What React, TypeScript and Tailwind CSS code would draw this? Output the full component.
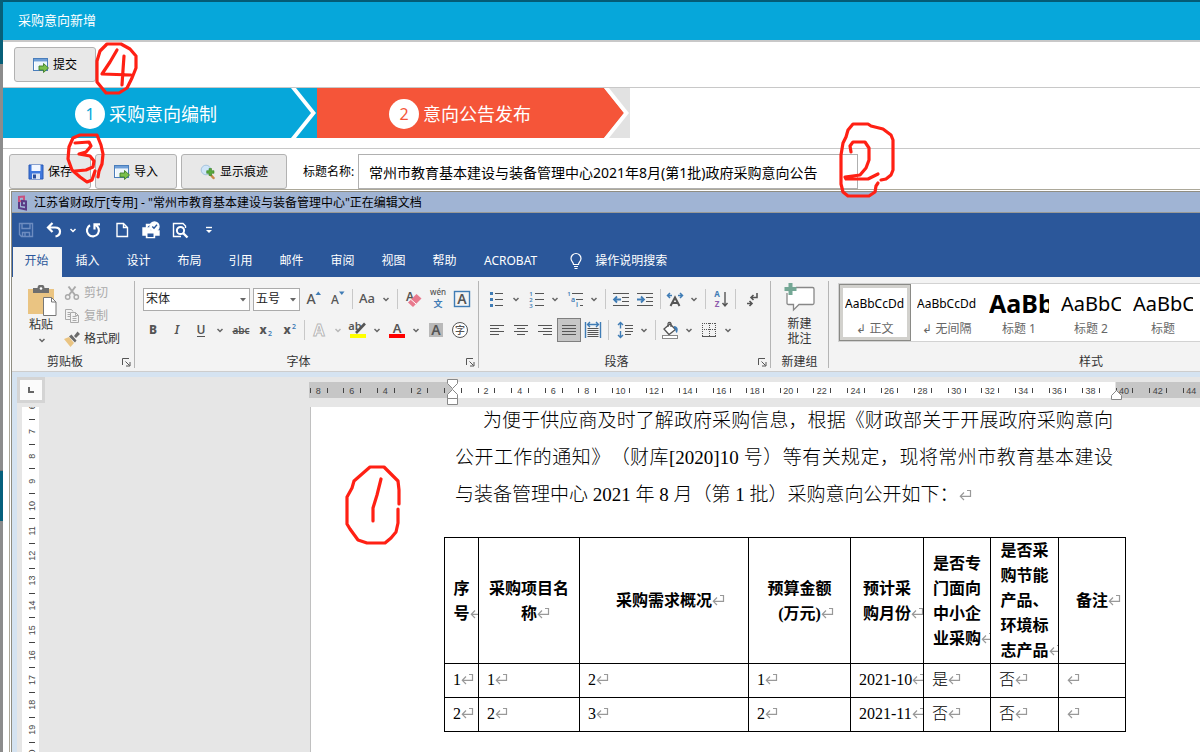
import React from "react";

const BLUE = "#3f7cb5";
const INK = "#555555";
const RED = "#ff2014";

const uiFont = "font-['Noto_Sans','Noto_Sans_CJK_SC',sans-serif]";
const docFont = "font-['Liberation_Serif','Noto_Sans_CJK_SC',serif] [text-spacing-trim:space-all]";

/* ---------- small building blocks ---------- */

function Svg({ className = "size-6", box = "0 0 24 24", children }: { className?: string; box?: string; children: React.ReactNode }) {
  return (
    <svg viewBox={box} className={`${className} shrink-0`} fill="none" stroke={INK} strokeWidth="1.4" aria-hidden="true">
      {children}
    </svg>
  );
}

function Chevron({ color = "#666" }: { color?: string }) {
  return (
    <svg viewBox="0 0 14 14" className="size-3.5 shrink-0" fill="none" stroke={color} strokeWidth="1.5" aria-hidden="true">
      <path d="M4.500 6 7 8.500 9.500 6" />
    </svg>
  );
}

function Tool({ label, active, children }: { label: string; active?: boolean; children: React.ReactNode }) {
  return (
    <button
      type="button"
      aria-label={label}
      className={`flex size-6 shrink-0 items-center justify-center ${active ? "bg-[#c6c6c6] outline outline-1 -outline-offset-1 outline-[#7f7f7f]" : ""}`}
    >
      <Svg>{children}</Svg>
    </button>
  );
}

function Split({ label, faded, children }: { label: string; faded?: boolean; children: React.ReactNode }) {
  return (
    <button type="button" aria-label={label} className="mr-px flex shrink-0 items-center">
      <Svg>{children}</Svg>
      <Chevron color={faded ? "#b8b8b8" : "#666"} />
    </button>
  );
}

function Sep() {
  return (
    <span className="flex w-1.5 shrink-0 justify-center">
      <span className="h-5 w-px bg-[#c8c8c8]" />
    </span>
  );
}

function Letter({ x = 12, y = 17, size = 15, fill = INK, weight = "600", anchor = "middle", children, style }: any) {
  return (
    <text x={x} y={y} fontSize={size} fill={fill} fontWeight={weight} textAnchor={anchor} stroke="none" fontStyle={style} fontFamily="Noto Sans, Noto Sans CJK SC, sans-serif">
      {children}
    </text>
  );
}

function Launcher({ label }: { label: string }) {
  return (
    <button type="button" aria-label={label} className="absolute right-[3px] bottom-1">
      <Svg className="size-[9px]" box="0 0 9 9">
        <path d="M.5 7V.5H7M3.500 3.500l4 4M8 4v4H4" strokeWidth="1" />
      </Svg>
    </button>
  );
}

function Group({ title, width, launcher, children }: { title: string; width: string; launcher?: boolean; children: React.ReactNode }) {
  return (
    <section aria-label={title} className={`relative flex shrink-0 flex-col pt-[5px] ${width}`}>
      <div className="flex-1">{children}</div>
      <div className="pb-0.5 text-center text-xs leading-[14px] text-[#333]">{title}</div>
      {launcher && <Launcher label={`${title}设置`} />}
    </section>
  );
}

function GroupLine() {
  return <div className="mt-1 mb-[3px] w-px shrink-0 bg-[#b5b5b5]" />;
}

function Return() {
  return (
    <span className="inline-block w-0 whitespace-nowrap align-baseline">
      <svg viewBox="0 0 13 12" className="inline-block h-3 w-[13px] max-w-none align-baseline" fill="none" stroke="#999" strokeWidth="1.2" aria-hidden="true">
        <path d="M8 1.500h3.500v5.800H1.500M5 3.500 1.300 7.300 5 11" />
      </svg>
    </span>
  );
}

/* ---------- page header ---------- */

function WindowArrowIcon() {
  return (
    <svg viewBox="0 0 16 16" className="size-4" aria-hidden="true">
      <rect x=".5" y="1.5" width="14" height="12" fill="#fff" stroke="#4a7ebb" />
      <rect x="1" y="2" width="13" height="2.5" fill="#6f9fd8" />
      <rect x="2" y="5" width="12" height="8" fill="#eef6fc" />
      <path d="M6 9h4.500V6.500L15.500 11 10.500 15.500V13H6z" fill="#7cc04b" stroke="#3f7f2a" strokeWidth=".9" />
    </svg>
  );
}

function DiskIcon() {
  return (
    <svg viewBox="0 0 16 16" className="size-4" aria-hidden="true">
      <path d="M1 1h14v14H1z" fill="#3f78dd" stroke="#2858b5" />
      <rect x="3.500" y="1" width="9" height="6" fill="#f3f7ff" />
      <rect x="4" y="9.500" width="8" height="5.500" fill="#dfe6f2" />
      <rect x="5" y="10.500" width="3" height="4" fill="#2c4f99" />
    </svg>
  );
}

function MagnifierPlusIcon() {
  return (
    <svg viewBox="0 0 16 16" className="size-4" aria-hidden="true">
      <path d="m9.500 9.500 4 4.500" stroke="#c98a4b" strokeWidth="2.500" strokeLinecap="round" />
      <circle cx="6" cy="6" r="4.800" fill="#cfe5f8" stroke="#a6c4de" />
      <path d="M9 4.500h2.500v2.200H14v2.600h-2.500v2.200H9V9.300H6.700V6.700H9z" fill="#58a83c" stroke="#3b8428" strokeWidth=".6" />
    </svg>
  );
}

function PageButton({ width, icon, children }: { width: string; icon: React.ReactNode; children: React.ReactNode }) {
  return (
    <button type="button" className={`flex h-[35px] shrink-0 items-center justify-center gap-1 rounded-[3px] border border-[#b2b2b2] bg-[#e8e8e8] text-xs text-black ${width}`}>
      {icon}
      {children}
    </button>
  );
}

function Steps() {
  return (
    <ol className="flex h-[50px] text-lg text-white">
      <li className="relative flex w-[314px] items-center gap-1 bg-[#06a7da] pt-0.5 pl-[72px]">
        <span className="flex size-[30px] items-center justify-center rounded-full bg-white text-base text-[#06a7da]">1</span>
        采购意向编制
        <svg viewBox="0 0 28 50" className="absolute top-0 right-0 h-[50px] w-7" aria-hidden="true">
          <path d="M2 0h5l20 25L7 50H2l20-25z" fill="#fff" />
        </svg>
      </li>
      <li className="relative flex w-[313px] items-center gap-1 bg-[#f55539] pt-0.5 pl-[72px]">
        <span className="flex size-[30px] items-center justify-center rounded-full bg-white text-base text-[#f55539]">2</span>
        意向公告发布
        <svg viewBox="0 0 28 50" className="absolute top-0 right-0 h-[50px] w-7" aria-hidden="true">
          <path d="M2 0h26v50H2l20-25z" fill="#e2e2e2" />
          <path d="M2 0h5l20 25L7 50H2l20-25z" fill="#fff" />
        </svg>
      </li>
    </ol>
  );
}

/* ---------- editor: title, quick access, tabs ---------- */

function QuickButton({ label, children }: { label: string; children: React.ReactNode }) {
  return (
    <button type="button" aria-label={label} className="flex w-7 shrink-0 justify-center">
      <svg viewBox="0 0 18 18" className="size-[18px]" fill="none" stroke="#fff" strokeWidth="1.400" aria-hidden="true">
        {children}
      </svg>
    </button>
  );
}

function QuickAccess() {
  return (
    <div className="flex h-[34px] items-center">
      <QuickButton label="保存">
        <path d="M2.500 2.500h13v13h-11l-2-2zM5 2.500v5h8v-5M5.500 15.500v-4h7v4M8 12v3" stroke="#6d8cc0" />
      </QuickButton>
      <button type="button" aria-label="撤消" className="ml-0.5 flex items-center">
        <span className="flex w-6 justify-center">
          <svg viewBox="0 0 18 18" className="size-[18px]" fill="none" stroke="#fff" strokeWidth="2.200" aria-hidden="true">
            <path d="M7.500 2 3 6.500 7.500 11M3.500 6.500H10c3 0 5 1.500 5 4s-2 4.500-4.500 5" />
          </svg>
        </span>
        <Chevron color="#fff" />
      </button>
      <div className="-ml-px flex items-center gap-px">
        <QuickButton label="重复">
          <path d="M11 3.800A6 6 0 1 1 6 4.200" strokeWidth="2.200" />
          <path d="M10.500 8.500V3.300H16" strokeWidth="2.200" />
        </QuickButton>
        <QuickButton label="新建">
          <path d="M4 2.500h6.500l4 4v9H4zM10.500 2.500v4h4" />
        </QuickButton>
        <QuickButton label="快速打印">
          <path d="M1 7h7v3h9v4H1zM4.500 12.500h8v4h-8zM4.500 7V3.500H8" fill="#fff" stroke="#fff" />
          <rect x="5.500" y="12.500" width="6" height="3.500" fill="#2b579a" stroke="none" />
          <circle cx="12.500" cy="5.500" r="4.500" fill="#fff" stroke="#fff" />
          <path d="m10.300 5.500 1.700 1.800 3-3.500" stroke="#2b579a" />
        </QuickButton>
        <QuickButton label="打印预览">
          <path d="M14.500 7V5L12 2.500H2.500v13H10" />
          <circle cx="9.500" cy="9.500" r="3.600" strokeWidth="2" />
          <path d="m12 12 4.500 4.500" strokeWidth="2.400" />
        </QuickButton>
        <QuickButton label="自定义快速访问工具栏">
          <path d="M6 6.500h6" />
          <path d="M6 9h6l-3 3z" fill="#fff" stroke="none" />
        </QuickButton>
      </div>
    </div>
  );
}

const TABS = ["插入", "设计", "布局", "引用", "邮件", "审阅", "视图", "帮助"];

function Tabs() {
  return (
    <nav className="flex h-[30px] items-stretch gap-0.5 pl-px text-xs text-white">
      <button type="button" className="w-[49px] shrink-0 bg-[#f3f3f3] pr-0.5 pb-0.5 text-[#2b579a]">开始</button>
      {TABS.map((t) => (
        <button type="button" key={t} className="w-[49px] shrink-0 pr-0.5 pb-0.5">{t}</button>
      ))}
      <button type="button" className="shrink-0 px-3 pb-0.5">ACROBAT</button>
      <button type="button" className="ml-[18px] flex shrink-0 items-center gap-3 pb-0.5">
        <svg viewBox="0 0 14 18" className="h-[18px] w-3.5" fill="none" stroke="#fff" strokeWidth="1.200" aria-hidden="true">
          <path d="M4.500 12.500c0-2.500-2.500-3-2.500-6a5 5 0 0 1 10 0c0 3-2.500 3.500-2.500 6zM5 14.500h4M5.500 16.500h3" />
        </svg>
        操作说明搜索
      </button>
    </nav>
  );
}

/* ---------- editor: ribbon groups ---------- */

function ClipboardGroup() {
  return (
    <Group title="剪贴板" width="w-[122px] pr-4" launcher>
      <div className="-mr-4 flex pt-[3px] pl-3.5 text-xs text-[#333]">
        <button type="button" className="flex w-8 shrink-0 flex-col items-center leading-4">
          <svg viewBox="0 0 32 32" className="size-8" aria-hidden="true">
            <rect x="2" y="4" width="26" height="25" fill="#eac482" />
            <path d="M7 3h4.500a3.500 3.500 0 0 1 7 0H23v5H7z" fill="#6e6e6e" />
            <circle cx="15" cy="3.500" r="1.300" fill="#fff" />
            <path d="M17.500 12.500h8l4.500 4.500v13.500H17.500z" fill="#fff" stroke="#777" />
            <path d="M25.500 12.500V17H30" fill="none" stroke="#777" />
          </svg>
          <span className="pr-0.5">粘贴</span>
          <Chevron />
        </button>
        <div className="-mt-1 ml-1.5 flex flex-col items-start whitespace-nowrap">
          <button type="button" disabled className="flex h-[23px] items-center gap-1 text-[#aaa]">
            <Svg className="size-4" box="0 0 16 16">
              <path d="M4.500 1.500 11 10M11.500 1.500 5 10" stroke="#aaa" strokeWidth="2" />
              <circle cx="3.700" cy="12" r="2.200" stroke="#aaa" />
              <circle cx="12.300" cy="12" r="2.200" stroke="#aaa" />
            </Svg>
            剪切
          </button>
          <button type="button" disabled className="flex h-[23px] items-center gap-1 text-[#aaa]">
            <Svg className="size-4" box="0 0 16 16">
              <path d="M6.500 11.500h-5v-10h6l1.500 2M3.500 4.500H6M3.500 6.500H6M3.500 8.500H6" stroke="#aaa" strokeWidth="1" />
              <path d="M6.500 4.500h5l3 3v7h-8zM11.500 4.500v3h3M8.500 8.500h4M8.500 10.500h4M8.500 12.500h4" stroke="#aaa" strokeWidth="1" />
            </Svg>
            复制
          </button>
          <button type="button" className="flex h-[23px] items-center gap-1">
            <Svg className="size-4" box="0 0 16 16">
              <path d="m0 8 5-2L10 12l-3.500 4z" fill="#eac482" stroke="none" />
              <path d="m5 5.500 2.500-2 5 6-1.500 2zM10 5l3.500-4.500L16 3l-4 4z" fill="#6a6a6a" stroke="none" />
            </Svg>
            格式刷
          </button>
        </div>
      </div>
    </Group>
  );
}

function Combo({ label, value, width }: { label: string; value: string; width: string }) {
  return (
    <span className={`relative flex h-[23px] shrink-0 ${width}`}>
      <select aria-label={label} defaultValue={value} className="w-full appearance-none border border-[#ababab] bg-white pl-0.5 text-xs text-[#222]">
        <option>{value}</option>
      </select>
      <svg viewBox="0 0 6 4" className="pointer-events-none absolute top-2.5 right-1 h-1 w-1.5" aria-hidden="true">
        <path d="M0 0h6L3 3.500z" fill="#666" />
      </svg>
    </span>
  );
}

function FontGroup() {
  return (
    <Group title="字体" width="w-[343px] pr-4" launcher>
      <div className="-mr-4 flex h-[34px] items-center pl-2">
        <div className="mr-px flex gap-[3px]">
          <Combo label="字体" value="宋体" width="w-[107px]" />
          <Combo label="字号" value="五号" width="w-[47px]" />
        </div>
        <Tool label="增大字号">
          <Letter x="10" size={14} weight="500">A</Letter>
          <path d="m14.500 8 2.800-3.500L20 8z" fill={BLUE} stroke="none" />
        </Tool>
        <Tool label="减小字号">
          <Letter x="10" size={12} weight="500">A</Letter>
          <path d="m14 4.500 2.800 3.500 2.700-3.500z" fill={BLUE} stroke="none" />
        </Tool>
        <Sep />
        <Split label="更改大小写"><Letter size={13} weight="500" y={16}>Aa</Letter></Split>
        <Sep />
        <span className="w-0.5" />
        <Tool label="清除格式">
          <Letter x="8" y={14} size={12}>A</Letter>
          <path d="m6 15.500 8.500-8.500 5 4.500L11 20z" fill="#e8798d" stroke="none" />
          <path d="m9 12.500 5 4.500" stroke="#fff" strokeWidth="1" />
        </Tool>
        <Tool label="拼音指南">
          <Letter size={8} y={8} weight="500">wén</Letter>
          <Letter size={9} y={20} fill={BLUE} weight="700">文</Letter>
        </Tool>
        <Tool label="字符边框">
          <rect x="4.500" y="4.500" width="15" height="15" stroke={BLUE} />
          <Letter size={14}>A</Letter>
        </Tool>
      </div>
      <div className="-mr-4 flex h-7 items-center pl-1.5">
        <Tool label="加粗"><Letter size={12} y={16} weight="800">B</Letter></Tool>
        <Tool label="倾斜"><Letter size={12} y={16} style="italic">I</Letter></Tool>
        <Split label="下划线">
          <Letter size={12} y={16}>U</Letter>
          <path d="M8 18.500h8" strokeWidth="1" />
        </Split>
        <span className="w-px" />
        <Tool label="删除线">
          <Letter size={10} y={16}>abc</Letter>
          <path d="M3.500 13.500h17" strokeWidth="1" />
        </Tool>
        <Tool label="下标">
          <Letter x="10" size={12} y={16} weight="800">x</Letter>
          <Letter x="17" size={7} y={18} fill={BLUE}>2</Letter>
        </Tool>
        <Tool label="上标">
          <Letter x="10" size={12} y={16} weight="800">x</Letter>
          <Letter x="17" size={7} y={11} fill={BLUE}>2</Letter>
        </Tool>
        <Sep />
        <Split label="文本效果" faded>
          <text x="12" y="17.500" fontSize="16" fontWeight="700" textAnchor="middle" fill="#fff" stroke="#b8b8b8" strokeWidth="1" fontFamily="Noto Sans">A</text>
        </Split>
        <Split label="突出显示">
          <Letter x="9" size={11} y={12}>ab</Letter>
          <path d="m10 15 9-9.500" strokeWidth="2.600" />
          <rect x="4" y="16" width="16" height="4" fill="#ffff00" stroke="none" />
        </Split>
        <Split label="字体颜色">
          <Letter size={13} y={14.500}>A</Letter>
          <rect x="4" y="16" width="16" height="4" fill="#ff0000" stroke="none" />
        </Split>
        <Tool label="字符底纹">
          <rect x="5" y="5" width="14" height="14" fill="#b9b9b9" stroke="none" />
          <Letter size={14}>A</Letter>
        </Tool>
        <Tool label="带圈字符">
          <circle cx="12" cy="12" r="7.500" fill="#fff" strokeWidth="1" />
          <Letter size={10} y={15.500} weight="500">字</Letter>
        </Tool>
      </div>
    </Group>
  );
}

function ParagraphGroup() {
  return (
    <Group title="段落" width="w-[291px] pr-4" launcher>
      <div className="-mr-4 flex h-[34px] items-center pl-1.5">
        <Split label="项目符号">
          <path d="M10 6.500h8M10 12.500h8M10 18.500h8" strokeWidth="1.200" />
          <path d="M5 5h3v3H5zM5 11h3v3H5zM5 17h3v3H5z" fill={BLUE} stroke="none" />
        </Split>
        <Split label="编号">
          <path d="M11 6.500h9M11 12.500h9M11 18.500h9" strokeWidth="1.200" />
          <Letter x="7" y={9} size={6} fill={BLUE}>1</Letter>
          <Letter x="7" y={15} size={6} fill={BLUE}>2</Letter>
          <Letter x="7" y={21} size={6} fill={BLUE}>3</Letter>
        </Split>
        <Split label="多级列表">
          <path d="M9 6.500h11M13 12.500h7M17 18.500h3" strokeWidth="1.200" />
          <Letter x="6" y={9} size={6} fill={BLUE}>1</Letter>
          <Letter x="10" y={15} size={7} fill={BLUE}>a</Letter>
          <Letter x="14" y={20} size={7} fill={BLUE}>i</Letter>
        </Split>
        <Sep />
        <span className="w-px" />
        <Tool label="减少缩进">
          <path d="M4 6.500h16M13 10.500h7M13 14.500h7M4 18.500h16" strokeWidth="1.200" />
          <path d="M5 12.500h7M8 9.500l-3 3 3 3" stroke={BLUE} strokeWidth="1.800" />
        </Tool>
        <Tool label="增加缩进">
          <path d="M4 6.500h16M13 10.500h7M13 14.500h7M4 18.500h16" strokeWidth="1.200" />
          <path d="M4 12.500h7M8 9.500l3 3-3 3" stroke={BLUE} strokeWidth="1.800" />
        </Tool>
        <Sep />
        <Split label="中文版式">
          <path d="M7.500 19 12 10.500 16.500 19M9 16h6" strokeWidth="2" />
          <path d="M5 8.500h4M7 6 4.500 8.500 7 11M19 8.500h-4M17 6l2.500 2.500L17 11" stroke={BLUE} strokeWidth="1.500" />
        </Split>
        <Sep />
        <Tool label="排序">
          <Letter x="9" y={10} size={8} fill={BLUE} weight="700">A</Letter>
          <Letter x="9" y={20} size={8} fill="#8e5cad" weight="700">Z</Letter>
          <path d="M17 5v14M14.500 16l2.500 3 2.500-3" />
        </Tool>
        <Sep />
        <span className="w-0.5" />
        <Tool label="显示编辑标记">
          <path d="M17 6v4.500h-6M13.500 8 11 10.500l2.500 2.500M7 16.500h5M9.500 14l2.500 2.500L9.500 19" strokeWidth="1.600" />
        </Tool>
      </div>
      <div className="-mr-4 flex h-7 items-center pl-1.5">
        <Tool label="左对齐"><path d="M5 7.500h14M5 10.500h9M5 13.500h14M5 16.500h9" strokeWidth="1" /></Tool>
        <Tool label="居中"><path d="M5 7.500h14M8 10.500h8M5 13.500h14M8 16.500h8" strokeWidth="1" /></Tool>
        <Tool label="右对齐"><path d="M5 7.500h14M10 10.500h9M5 13.500h14M10 16.500h9" strokeWidth="1" /></Tool>
        <Tool label="两端对齐" active><path d="M5 7.500h14M5 10.500h14M5 13.500h14M5 16.500h14" strokeWidth="1" /></Tool>
        <Tool label="分散对齐">
          <path d="M4.500 4v16M19.500 4v16" stroke={BLUE} />
          <path d="M6.500 6.500h11M9 4 6.500 6.500 9 9M15 4l2.500 2.500L15 9" stroke={BLUE} />
          <path d="M6.500 10.500h11M6.500 12.500h11M6.500 14.500h11M6.500 16.500h11M6.500 18.500h11" strokeWidth="1" />
        </Tool>
        <Sep />
        <span className="w-0.5" />
        <Split label="行距">
          <path d="M12 7.500h8M12 10.500h8M12 13.500h8M12 16.500h6" strokeWidth="1" />
          <path d="M7.500 4.500v6M5 7l2.500-2.500L10 7M7.500 13v6.500M5 17l2.500 2.500L10 17" stroke={BLUE} />
        </Split>
        <Sep />
        <Split label="底纹">
          <path d="m6 11 6-5 5.500 5.500-6.500 5z" fill="#fff" strokeWidth="1.300" />
          <path d="M10 9V5.500a1.600 1.600 0 0 1 3 0V9" strokeWidth="1.200" />
          <path d="M16 8c4 .5 4.500 3 3 7-2-1-1-4-3-5z" fill={BLUE} stroke="none" />
          <rect x="4.500" y="17.500" width="15" height="3" fill="#fff" stroke="#888" strokeWidth="1" />
        </Split>
        <Split label="边框">
          <path d="M5.500 5v13M18.500 5v13M12.500 5v13M5 5.500h14M5 11.500h14" strokeWidth="1" strokeDasharray="1 1" />
          <path d="M5 18.500h14" strokeWidth="1" />
        </Split>
      </div>
    </Group>
  );
}

function CommentGroup() {
  return (
    <Group title="新建组" width="w-[57px]">
      <button type="button" className="flex w-full flex-col items-center text-xs leading-[15px] text-[#333]">
        <svg viewBox="0 0 32 32" className="mb-0.5 size-8" fill="none" aria-hidden="true">
          <path d="M12 5.500h16.500q1.500 0 1.500 1.500v14q0 1.500-1.500 1.500H15L9.500 28v-5.500H4.500Q3 22.500 3 21V11" fill="#fff" stroke="#888" strokeWidth="1.300" />
          <path d="M4.500 1h4v4h4v4h-4v4h-4V9h-4V5h4z" fill="#74a795" />
        </svg>
        <span>新建</span>
        <span>批注</span>
      </button>
    </Group>
  );
}

const STYLES = [
  { sample: "AaBbCcDd", name: "正文", mark: true, look: "text-xs" },
  { sample: "AaBbCcDd", name: "无间隔", mark: true, look: "text-xs" },
  { sample: "AaBb", name: "标题 1", mark: false, look: "text-[25px] font-bold" },
  { sample: "AaBbC", name: "标题 2", mark: false, look: "text-xl" },
  { sample: "AaBbC", name: "标题", mark: false, look: "text-xl" },
  { sample: "AaBbC", name: "副标题", mark: false, look: "text-xl" },
];

function StylesGroup() {
  return (
    <Group title="样式" width="w-[524px]">
      <div className="mt-px ml-[9px] flex h-[59px] border border-[#d2d2d2] bg-white">
        {STYLES.map((s, i) => (
          <button
            type="button"
            key={s.name}
            className={`flex w-[72px] shrink-0 flex-col items-center justify-center pt-1 ${i === 0 ? "border border-[#8a8a86] shadow-[inset_0_0_0_3px_#d2d1cd]" : ""}`}
          >
            <span className={`flex h-7 w-[60px] items-center overflow-hidden whitespace-nowrap leading-none text-black ${s.look}`}>{s.sample}</span>
            <span className="text-xs leading-[22px] text-[#666]">{s.mark ? "↲ " : ""}{s.name}</span>
          </button>
        ))}
      </div>
    </Group>
  );
}

/* ---------- editor: rulers and document ---------- */

function HorizontalRuler() {
  const zero = 143.5;
  const unit = 16.79;
  const nums: number[] = [];
  for (let n = -8; n <= 60; n += 2) if (n !== 0) nums.push(n);
  const ticks: number[] = [];
  for (let n = -8; n <= 60; n += 1) ticks.push(n);
  return (
    <svg className="block h-[30px] w-full" fontFamily="Liberation Sans, sans-serif" fontSize="9" fill="#444" textAnchor="middle">
      <rect x="0" y="5" width="100%" height="16" fill="#c6c6c6" />
      <rect x={zero} y="5" width="663" height="16" fill="#fff" />
      {ticks.map((n) => (
        <rect key={n} x={Math.round(zero + (n - 0.5) * unit)} y="11" width="1" height="5" />
      ))}
      {nums.map((n) => (
        <text key={n} x={zero + n * unit} y="17">{Math.abs(n)}</text>
      ))}
      <g fill="#fff" stroke="#888">
        <path d="M138.500 2.500h10v4l-5 5-5-5z" />
        <path d="m143.500 12.500 5 5v4h-10v-4zM138.500 21.500h10v6h-10z" />
        <path d="m807.500 13.500 5 5v4h-10v-4z" />
      </g>
    </svg>
  );
}

function VerticalRuler() {
  const items = Array.from({ length: 15 }, (_, i) => i + 6);
  return (
    <svg className="ml-[5px] block h-[345px] w-[17px] bg-white" fontFamily="Liberation Sans, sans-serif" fontSize="9" fill="#444" textAnchor="middle">
      {items.map((n) => {
        const y = 24.5 + (n - 7) * 24.85;
        return (
          <g key={n}>
            <text transform={`translate(13 ${y}) rotate(-90)`}>{n}</text>
            <rect x="7" y={Math.round(y + 12)} width="6" height="1" />
          </g>
        );
      })}
    </svg>
  );
}

const HEADS: string[][] = [
  ["序", "号"],
  ["采购项目名", "称"],
  ["采购需求概况"],
  ["预算金额", "(万元)"],
  ["预计采", "购月份"],
  ["是否专", "门面向", "中小企", "业采购"],
  ["是否采", "购节能", "产品、", "环境标", "志产品"],
  ["备注"],
];

const ROWS = [
  ["1", "1", "2", "1", "2021-10", "是", "否", ""],
  ["2", "2", "3", "2", "2021-11", "否", "否", ""],
];

function PlanTable() {
  const cell = "overflow-hidden border border-black px-2 whitespace-nowrap";
  return (
    <table className="mt-[29px] ml-[133px] w-[682px] table-fixed border-collapse text-base leading-[25px] text-black">
      <colgroup>
        <col className="w-[34px]" />
        <col className="w-[101px]" />
        <col className="w-[169px]" />
        <col className="w-[102px]" />
        <col className="w-[73px]" />
        <col className="w-[67px]" />
        <col className="w-[68px]" />
        <col className="w-[67px]" />
      </colgroup>
      <thead>
        <tr>
          {HEADS.map((lines) => (
            <th key={lines.join("")} scope="col" className={`${cell} text-center font-bold`}>
              {lines.map((l, i) => (
                <span key={l} className="block">
                  {l}
                  {i === lines.length - 1 && <Return />}
                </span>
              ))}
            </th>
          ))}
        </tr>
      </thead>
      <tbody>
        {ROWS.map((r) => (
          <tr key={r[0]} className="h-[34px]">
            {r.map((c, i) => (
              <td key={i} className={`${cell} pb-0.5 font-light`}>
                {c}
                <Return />
              </td>
            ))}
          </tr>
        ))}
      </tbody>
    </table>
  );
}

function Document() {
  return (
    <article className={`ml-px flex-1 border-l border-[#c0c0c0] bg-white pb-5 ${docFont}`}>
      <div className="ml-36 flex w-[658px] flex-col gap-[11px] pt-px text-[19px] leading-[26px] font-light whitespace-nowrap text-black">
        <p className="pl-7 [text-align-last:justify]">为便于供应商及时了解政府采购信息，根据《财政部关于开展政府采购意向</p>
        <p className="[text-align-last:justify]">公开工作的通知》（财库[2020]10 号）等有关规定，现将常州市教育基本建设</p>
        <p>
          与装备管理中心 2021 年 8 月（第 1 批）采购意向公开如下：
          <Return />
        </p>
      </div>
      <PlanTable />
    </article>
  );
}

/* ---------- hand-drawn numbers ---------- */

function Marks() {
  return (
    <svg className="pointer-events-none absolute top-0 left-0 h-[752px] w-[1200px]" fill="none" stroke={RED} strokeWidth="3.200" strokeLinecap="round" strokeLinejoin="round" aria-hidden="true">
      <path d="M107 44h14l9 5 6 7v12l-4 10-5 10-8 5h-13l-9-11V61l3-10zM117 50l-7 12-8 12 29 1M124 56l-1 14-1 15" />
      <path d="m98 177 1-6 3-7 1-10-2-9-4-10H80l-7 3-4 9-1 12 4 11 8 7 7 5 5-2 3-9M75 143l14-1 2 4-5 6-7 2 11 2 4 5-1 6-7 3-11 1" />
      <path d="M881 180l5-1 5-4 2-5v-30l-2-5-8-6-12-3-3-2h-15l-5 6-2 7-3 6-2 12v29l2 8 5 4h21l6-4 1-6 2-3M851 152l-1-6 3-4h12l4 6v12l-3 8-6 7-15 2 1 2h22l10-5" />
      <path d="M399 504v-14l-1-9-5-5-9-9h-14l-8 7-8 7-2 7-5 9v27l3 5 8 11 9 3h18l6-5 5-6 2-9v-14M381 479l-4 16-4 13v13" />
    </svg>
  );
}

/* ---------- page ---------- */

export default function App() {
  return (
    <div className={`relative flex min-h-screen overflow-hidden bg-white ${uiFont}`}>
      <div className="flex w-[3px] shrink-0 flex-col bg-[#8c8c8c]">
        <div className="h-16 bg-[#075f78]" />
        <div className="h-[407px] border-b border-[#777]" />
        <div className="h-[50px] bg-[#05607c]" />
      </div>
      <main className="flex min-w-0 flex-1 flex-col">
        <div className="h-0.5 bg-[#045b75]" />
        <header className="flex h-10 items-center border-b-2 border-[#c8c8c8] bg-[#06a7da] pl-[15px]">
          <h1 className="text-[13px] text-white">采购意向新增</h1>
        </header>
        <div className="flex h-[46px] items-center border-b border-[#c8c8c8] pl-[11px]">
          <PageButton width="w-[82px]" icon={<WindowArrowIcon />}>提交</PageButton>
        </div>
        <Steps />
        <div className="mt-2.5 flex border-t border-[#c8c8c8] pt-[5px] pl-1.5">
          <div className="flex gap-1">
            <PageButton width="w-[82px]" icon={<DiskIcon />}>保存</PageButton>
            <PageButton width="w-[82px]" icon={<WindowArrowIcon />}>导入</PageButton>
            <PageButton width="w-[106px]" icon={<MagnifierPlusIcon />}>显示痕迹</PageButton>
          </div>
          <label htmlFor="notice-title" className="ml-4 flex w-[55px] shrink-0 items-center text-xs whitespace-nowrap text-black">标题名称:</label>
          <input
            id="notice-title"
            defaultValue="常州市教育基本建设与装备管理中心2021年8月(第1批)政府采购意向公告"
            className="h-[35px] w-[500px] border border-[#b0b0b0] bg-white pl-2.5 text-sm text-black"
          />
        </div>

        <section aria-label="文档编辑器" className="ml-1.5 flex flex-1 flex-col border-t border-l border-[#aca899] pt-px pl-px">
          <div className="flex flex-1 flex-col border-t border-l border-[#8f8d82]">
            <div className="flex h-[21px] items-center gap-[5px] border-b border-[#9a9a96] bg-[#a0b4d4] pt-px pl-1 text-xs text-black">
              <svg viewBox="0 0 12 16" className="ml-px h-4 w-3" fill="none" strokeWidth="2" aria-hidden="true">
                <path d="M2 7V2l5-.5v4l-5 1" stroke="#c8517f" />
                <path d="M2 7v6l7 1.500V6.500L5 6v4l4 .5" stroke="#5a3a86" />
              </svg>
              江苏省财政厅[专用] - "常州市教育基本建设与装备管理中心"正在编辑文档
            </div>
            <div className="bg-[#2b579a]">
              <QuickAccess />
              <Tabs />
            </div>
            <div className="flex h-[95px] overflow-hidden border-b border-[#cdcdcd] bg-[#f3f3f3]">
              <ClipboardGroup />
              <GroupLine />
              <FontGroup />
              <GroupLine />
              <ParagraphGroup />
              <GroupLine />
              <CommentGroup />
              <GroupLine />
              <StylesGroup />
            </div>
            <div className="flex flex-1 border-t-[5px] border-l-[5px] border-[#d5e3f1] bg-[#e6e6e6]">
              <div className="w-7 shrink-0">
                <button type="button" aria-label="制表符" className="mb-1 flex h-[26px] w-7 items-center justify-center border-[3px] border-[#d4d4d4] bg-[#fbfbfb]">
                  <svg viewBox="0 0 6 6" className="size-1.5" aria-hidden="true">
                    <path d="M1 0v5h5" fill="none" stroke="#666" strokeWidth="2" />
                  </svg>
                </button>
                <VerticalRuler />
              </div>
              <div className="ml-[264px] flex min-w-0 flex-1 flex-col">
                <HorizontalRuler />
                <Document />
              </div>
            </div>
          </div>
        </section>
      </main>
      <Marks />
    </div>
  );
}
